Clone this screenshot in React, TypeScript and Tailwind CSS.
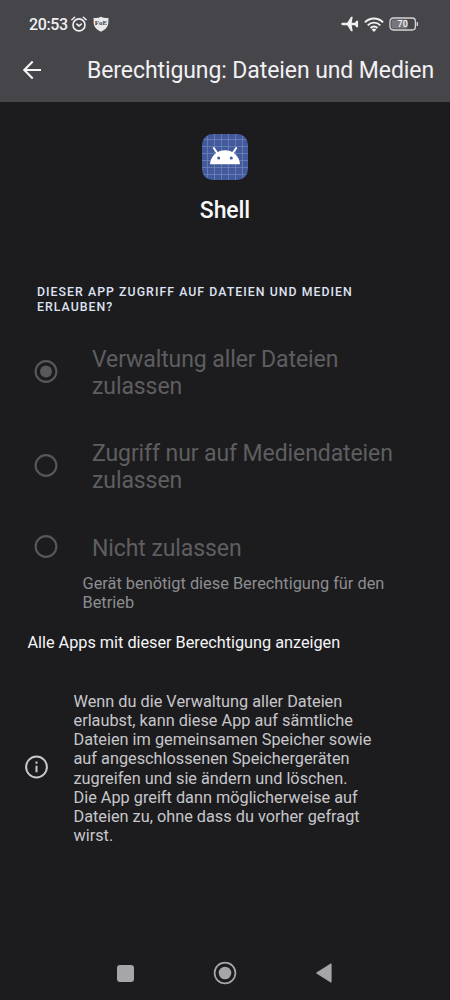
import type { ReactNode } from "react";

interface RadioOptionProps {
  checked?: boolean;
  className: string;
  children: ReactNode;
}

const StatusBar = () => {
  return (
    <div className="flex h-12 items-center pl-[29px] pr-[31px] text-[#f0f0f2]">
      <span className="w-[41px] whitespace-nowrap pt-[2px] text-[16px] font-medium leading-none tracking-[-0.4px]">20:53</span>
      <svg className="ml-[1px] h-4 w-4 shrink-0" viewBox="0 0 16 16" fill="none" stroke="currentColor" strokeLinecap="round">
        <circle cx="8" cy="8.9" r="6" strokeWidth="1.6" />
        <path d="M.9 3.7 3.6 1.3M15.1 3.7 12.4 1.3" strokeWidth="1.5" />
        <path d="M5.8 8.1 8 9.9l2.3-1.8" strokeWidth="1.6" />
      </svg>
      <svg className="ml-[6px] h-4 w-4 shrink-0" viewBox="0 0 16 16">
        <path d="M.6 1.8C3.4 2.3 5.7 1.9 8 .8c2.3 1.1 4.6 1.5 7.4 1v4c0 4.8-2.2 7.4-7.4 9.9C2.8 13.2.6 10.6.6 5.8Z" fill="#e9e9eb" />
        <text x="8" y="9.2" textAnchor="middle" fontSize="7" fontWeight="700" fontFamily="Liberation Serif, serif" fill="#3c3c40">FoE</text>
      </svg>
      <div className="grow" />
      <svg className="h-4 w-[18px] shrink-0" viewBox="0 0 18 16" fill="currentColor">
        <path d="M.3 8c0-.7.6-1.2 1.4-1.2H6.2L10.1.8h1.6l-1 6h3.2l1.5-2h1.7v6.4h-1.7l-1.5-2h-3.2l1 6h-1.6L6.2 9.2H1.7C.9 9.2.3 8.7.3 8Z" />
      </svg>
      <svg className="ml-[5px] h-[15px] w-5 shrink-0" viewBox="0 0 20 15" fill="none" stroke="currentColor" strokeWidth="1.9">
        <path d="M.9 5.4C6 .2 14 .2 19.1 5.4M3.7 8.3c3.6-3.6 9-3.6 12.6 0M6.5 11c2-2 5-2 7 0" />
        <path d="M7.6 12.4c1.4-1.2 3.4-1.2 4.8 0L10 14.9Z" fill="currentColor" stroke="none" />
      </svg>
      <svg className="ml-[5px] h-[14px] w-[30px] shrink-0" viewBox="0 0 30 14">
        <rect x="2.5" y="2.5" width="16" height="9" rx="1.5" fill="#77777b" />
        <rect x="1" y="1" width="25.4" height="12" rx="3.2" fill="none" stroke="#d5d5d7" strokeWidth="1.3" />
        <rect x="27.6" y="5" width="1.4" height="4" rx=".5" fill="#d5d5d7" />
        <text x="13.7" y="10.3" textAnchor="middle" fontSize="9" fontWeight="500" fill="#f4f4f6">70</text>
      </svg>
    </div>
  );
};

const AppIcon = () => {
  return (
    <svg className="h-[46px] w-[46px]" viewBox="0 0 46 46">
      <rect width="46" height="46" rx="10.5" fill="#425a9c" />
      <path d="M5.5 2v42M12.5 0v46M19.5 0v46M26.5 0v46M33.5 0v46M40.5 2v42M2 5.5h42M0 12.5h46M0 19.5h46M0 26.5h46M0 33.5h46M2 40.5h42" stroke="#7388bd" strokeWidth=".7" />
      <path d="m11.8 14 4.4 6.5M34.2 14l-4.4 6.5" stroke="#fff" strokeWidth="2" strokeLinecap="round" />
      <path d="M8 30.2C8.6 22 15 16.2 23 16.2S37.4 22 38 30.2Z" fill="#fff" />
      <circle cx="16.7" cy="24" r="1.5" fill="#425a9c" />
      <circle cx="29.3" cy="24" r="1.5" fill="#425a9c" />
    </svg>
  );
};

const RadioOption = (props: RadioOptionProps) => {
  return (
    <div className={`flex items-center pl-[34px] ${props.className}`}>
      <svg className="h-6 w-6 shrink-0" viewBox="0 0 24 24">
        <circle cx="12" cy="11.5" r="10.4" fill="none" stroke="#58585a" strokeWidth="2.1" />
        {props.checked && <circle cx="12" cy="11.5" r="6" fill="#58585a" />}
      </svg>
      <div className="ml-[34px] whitespace-nowrap pt-[2px] text-[23px] leading-[27px] tracking-[-0.09px] text-[#5e5e60]">{props.children}</div>
    </div>
  );
};

const NavigationBar = () => {
  return (
    <div className="flex h-[54px] items-center justify-between pl-[117px] pr-[118px] text-[#a6a6a8]">
      <div className="h-[17px] w-[17px] rounded-[3px] bg-[#a6a6a8]" />
      <svg className="h-6 w-6" viewBox="0 0 24 24">
        <circle cx="12" cy="12" r="10.4" fill="none" stroke="currentColor" strokeWidth="1.7" />
        <circle cx="12" cy="12" r="6.3" fill="currentColor" />
      </svg>
      <svg className="h-5 w-4" viewBox="0 0 16 20" fill="currentColor" stroke="currentColor" strokeWidth="1.2" strokeLinejoin="round">
        <path d="M.8 10 15 1.1v17.8Z" />
      </svg>
    </div>
  );
};

const App = () => {
  return (
    <div className="flex h-[1000px] w-[450px] flex-col overflow-hidden bg-[#1c1c1e] font-[Roboto,sans-serif]">
      <header className="h-[102px] shrink-0 bg-[#464549]">
        <StatusBar />
        <div className="flex h-11 items-center pl-[22px]">
          <svg className="h-5 w-5 shrink-0" viewBox="0 0 20 20" fill="none" stroke="#f6f6f8" strokeWidth="2.1">
            <path d="M19 10H2.4M10.7 1.6 2.3 10l8.4 8.4" />
          </svg>
          <h1 className="ml-[45px] whitespace-nowrap pt-[2px] text-[23px] leading-[28px] tracking-[-0.09px] text-[#f1f0f4]">Berechtigung: Dateien und Medien</h1>
        </div>
      </header>

      <main className="flex grow flex-col">
        <div className="flex flex-col items-center pt-8">
          <AppIcon />
          <div className="mt-[17px] text-[23px] font-medium leading-[28px] tracking-[-0.1px] text-[#f8f8fa]">Shell</div>
        </div>

        <h2 className="mt-[60px] whitespace-nowrap pl-[37px] text-[12.3px] font-medium leading-[15px] tracking-[1.05px] text-[#dfe3f3]">
          DIESER APP ZUGRIFF AUF DATEIEN UND MEDIEN
          <br />
          ERLAUBEN?
        </h2>

        <RadioOption checked className="mt-[29px] h-[56px]">
          Verwaltung aller Dateien
          <br />
          zulassen
        </RadioOption>
        <RadioOption className="mt-[38px] h-[56px]">
          Zugriff nur auf Mediendateien
          <br />
          zulassen
        </RadioOption>
        <RadioOption className="mt-[39px] h-[28px]">Nicht zulassen</RadioOption>

        <p className="mt-[13px] whitespace-nowrap pl-[82.5px] text-[16.35px] leading-[19px] text-[#8d8d90]">
          Gerät benötigt diese Berechtigung für den
          <br />
          Betrieb
        </p>
        <a className="mt-[21px] whitespace-nowrap pl-[27.5px] text-[16.3px] leading-[20px] tracking-[-0.02px] text-[#f5f5f7]">
          Alle Apps mit dieser Berechtigung anzeigen
        </a>

        <div className="mt-[39px] flex items-center pl-[25px]">
          <svg className="mb-[3px] h-6 w-6 shrink-0" viewBox="0 0 24 24" fill="none" stroke="#c9c8cc" strokeWidth="2">
            <circle cx="11.5" cy="12" r="10.4" />
            <path d="M11.5 10.8v6.4M11.5 6.6v2.2" />
          </svg>
          <p className="ml-[24.5px] whitespace-nowrap text-[16.3px] leading-[19.15px] text-[#c7c6ca]">
            Wenn du die Verwaltung aller Dateien
            <br />
            erlaubst, kann diese App auf sämtliche
            <br />
            Dateien im gemeinsamen Speicher sowie
            <br />
            auf angeschlossenen Speichergeräten
            <br />
            zugreifen und sie ändern und löschen.
            <br />
            Die App greift dann möglicherweise auf
            <br />
            Dateien zu, ohne dass du vorher gefragt
            <br />
            wirst.
          </p>
        </div>
      </main>

      <NavigationBar />
    </div>
  );
};

export default App;
